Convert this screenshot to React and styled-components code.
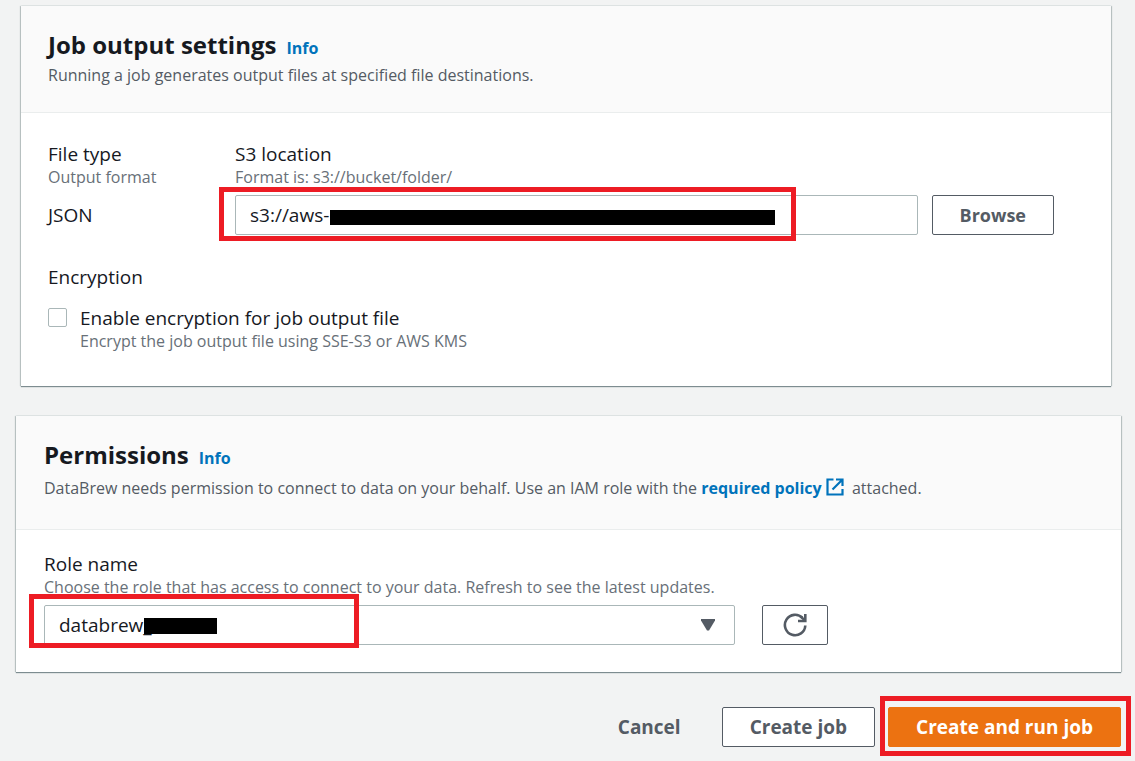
import React, { useState } from 'react';
import styled, { createGlobalStyle } from 'styled-components';

const GlobalStyle = createGlobalStyle`
    *, *::before, *::after {
        box-sizing: border-box;
    }

    body {
        margin: 0;
        background: #f2f3f3;
        color: #16191f;
        font-family: "Open Sans", "Noto Sans", sans-serif;
        font-size: 19px;
        line-height: 24px;
    }

    button, input, select {
        font: inherit;
        color: inherit;
    }
`;

const ExternalIcon = () => (
    <svg width="18" height="18" viewBox="0 0 18 18" fill="none" stroke="currentColor" strokeWidth="2.2" aria-hidden="true">
        <path d="M7.5 1.5H1.5V16.5H16.5V11" />
        <path d="M10 1.5H16.5V8M16.5 1.5L6.5 11.5" />
    </svg>
);

const RefreshIcon = () => (
    <svg width="24" height="24" viewBox="0 0 24 24" fill="none" stroke="currentColor" strokeWidth="2.6" aria-hidden="true">
        <path d="M22.3 12.5A10.2 10.2 0 1 1 19.5 5" />
        <path d="M22.3 1V8H15" />
        <path d="M18 3.5L22 8" />
    </svg>
);

const App = () => {
    const [location, setLocation] = useState('s3://aws-');
    const [encrypted, setEncrypted] = useState(false);

    return (
        <Page>
            <GlobalStyle />
            <Panel $inset>
                <PanelHeader>
                    <TitleRow>
                        <h2>Job output settings</h2>
                        <InfoLink href="#output-info">Info</InfoLink>
                    </TitleRow>
                    <Description>Running a job generates output files at specified file destinations.</Description>
                </PanelHeader>
                <OutputBody>
                    <OutputGrid>
                        <Field>
                            <Label as="span">File type</Label>
                            <Hint>Output format</Hint>
                            <Value>JSON</Value>
                        </Field>
                        <Field>
                            <Label htmlFor="location">S3 location</Label>
                            <Hint>Format is: s3://bucket/folder/</Hint>
                            <Control>
                                <TextInput id="location" value={location} onChange={(e) => setLocation(e.target.value)} />
                                <LocationRedaction />
                                <LocationMark />
                            </Control>
                        </Field>
                        <Button type="button">Browse</Button>
                    </OutputGrid>
                    <Encryption>
                        <legend>Encryption</legend>
                        <CheckRow>
                            <Checkbox id="encrypt" type="checkbox" checked={encrypted}
                                      onChange={() => setEncrypted(!encrypted)} />
                            <Field>
                                <Label htmlFor="encrypt">Enable encryption for job output file</Label>
                                <Hint>Encrypt the job output file using SSE-S3 or AWS KMS</Hint>
                            </Field>
                        </CheckRow>
                    </Encryption>
                </OutputBody>
            </Panel>

            <Panel>
                <PanelHeader>
                    <TitleRow>
                        <h2>Permissions</h2>
                        <InfoLink href="#permissions-info">Info</InfoLink>
                    </TitleRow>
                    <Description $tall>
                        DataBrew needs permission to connect to data on your behalf. Use an IAM role with the{' '}
                        <PolicyLink href="#policy">required policy <ExternalIcon /></PolicyLink> attached.
                    </Description>
                </PanelHeader>
                <RoleBody>
                    <Field>
                        <Label htmlFor="role">Role name</Label>
                        <Hint>Choose the role that has access to connect to your data. Refresh to see the latest updates.</Hint>
                    </Field>
                    <RoleRow>
                        <Control>
                            <Select id="role" defaultValue="databrew_">
                                <option>databrew_</option>
                            </Select>
                            <Caret viewBox="0 0 14 12" aria-hidden="true">
                                <path d="M0 0H14V1.5L8 11.5H6L0 1.5Z" fill="#545b64" />
                            </Caret>
                            <RoleRedaction />
                            <RoleMark />
                        </Control>
                        <IconButton type="button" aria-label="Refresh roles"><RefreshIcon /></IconButton>
                    </RoleRow>
                </RoleBody>
            </Panel>

            <Actions>
                <TextButton type="button" $large>Cancel</TextButton>
                <Button type="button" $large>Create job</Button>
                <Control>
                    <PrimaryButton type="button" $large>Create and run job</PrimaryButton>
                    <SubmitMark />
                </Control>
            </Actions>
        </Page>
    )
}

const Page = styled.main`
    display: flex;
    flex-direction: column;
    gap: 30px;
    padding: 6px 14px 10px 16px;
`;

const Panel = styled.section`
    margin: ${({ $inset }) => ($inset ? '0 10px 0 5px' : '0')};
    --gutter: ${({ $inset }) => ($inset ? '27px' : '28px')};
    background: white;
    box-shadow: 0 1px 1px #7d8c90, 1px 0 1px #c3cacb, -1px 0 1px #c3cacb, 0 -1px 0 #eaeded;
`;

const PanelHeader = styled.header`
    padding: 22px var(--gutter) 25px;
    background: #fafafa;
    border-bottom: 1px solid #eaeded;
`;

const TitleRow = styled.div`
    display: flex;
    align-items: baseline;
    gap: 10px;
    margin-bottom: 1px;

    h2 {
        margin: 0;
        font-size: 24px;
        line-height: 34px;
        font-weight: 700;
    }
`;

const InfoLink = styled.a`
    color: #0073bb;
    font-size: 16px;
    font-weight: 700;
    text-decoration: none;
`;

const Description = styled.p`
    margin: 0;
    color: #545b64;
    font-size: 16px;
    line-height: ${({ $tall }) => ($tall ? '31px' : '24px')};
`;

const PolicyLink = styled.a`
    color: #0073bb;
    font-weight: 700;
    text-decoration: none;

    svg {
        margin-right: 4px;
        vertical-align: -2px;
    }
`;

const OutputBody = styled.div`
    padding: 29px 57px 34px var(--gutter);
`;

const OutputGrid = styled.div`
    display: grid;
    grid-template-columns: 173px 1fr auto;
    column-gap: 14px;
    align-items: end;
`;

const Field = styled.div`
    display: flex;
    flex-direction: column;
`;

const Label = styled.label`
    font-size: 19px;
    line-height: 24px;
`;

const Hint = styled.span`
    color: #687078;
    font-size: 16px;
    line-height: 22px;
`;

const Value = styled.span`
    margin-top: 7px;
    line-height: 40px;
`;

const Control = styled.div`
    position: relative;
    display: flex;
`;

const TextInput = styled.input`
    width: 100%;
    height: 40px;
    margin-top: 7px;
    padding: 0 14px;
    background: white;
    border: 1px solid #aab7b8;
    border-radius: 2px;
`;

const Button = styled.button`
    height: 40px;
    padding: 0 27px;
    background: white;
    border: 1px solid #545b64;
    border-radius: 2px;
    color: #545b64;
    font-size: ${({ $large }) => ($large ? '19px' : '18px')};
    font-weight: 700;
    white-space: nowrap;
`;

const PrimaryButton = styled(Button)`
    background: #ec7211;
    border-color: #ec7211;
    color: white;
`;

const TextButton = styled(Button)`
    background: transparent;
    border-color: transparent;
`;

const IconButton = styled(Button)`
    display: flex;
    align-items: center;
    padding: 0 20px;
`;

const Encryption = styled.fieldset`
    margin: 30px 0 0;
    padding: 0;
    border: 0;

    legend {
        padding: 0;
    }
`;

const CheckRow = styled.div`
    display: flex;
    gap: 13px;
    margin-top: 17px;
`;

const Checkbox = styled.input`
    appearance: none;
    width: 19px;
    height: 19px;
    margin: 2px 0 0;
    background: white;
    border: 1px solid #aab7b8;
    border-radius: 2px;

    &:checked {
        background: #0073bb;
    }
`;

const RoleBody = styled.div`
    padding: 22px 28px 27px;
`;

const RoleRow = styled.div`
    display: grid;
    grid-template-columns: minmax(0, 691px) auto;
    justify-content: start;
    gap: 27px;
    margin-top: 7px;
`;

const Select = styled.select`
    appearance: none;
    width: 100%;
    height: 40px;
    padding: 0 14px;
    background: white;
    border: 1px solid #aab7b8;
    border-radius: 2px;
`;

const Caret = styled.svg`
    position: absolute;
    top: 14px;
    right: 20px;
    width: 14px;
    height: 12px;
    pointer-events: none;
`;

const Redaction = styled.span`
    position: absolute;
    background: black;
    pointer-events: none;
`;

const LocationRedaction = styled(Redaction)`
    top: 22px;
    left: 95px;
    width: 445px;
    height: 15px;
`;

const RoleRedaction = styled(Redaction)`
    top: 13px;
    left: 100px;
    width: 73px;
    height: 16px;
`;

const Mark = styled.span`
    position: absolute;
    border: 5px solid #ed1c24;
    pointer-events: none;
`;

const LocationMark = styled(Mark)`
    top: -1px;
    left: -16px;
    width: 577px;
    height: 54px;
`;

const RoleMark = styled(Mark)`
    top: -11px;
    left: -15px;
    width: 330px;
    height: 54px;
`;

const SubmitMark = styled(Mark)`
    inset: -11px -10px -9px -8px;
`;

const Actions = styled.div`
    display: flex;
    justify-content: flex-end;
    gap: 13px;
    margin-top: 5px;
`;

export default App
